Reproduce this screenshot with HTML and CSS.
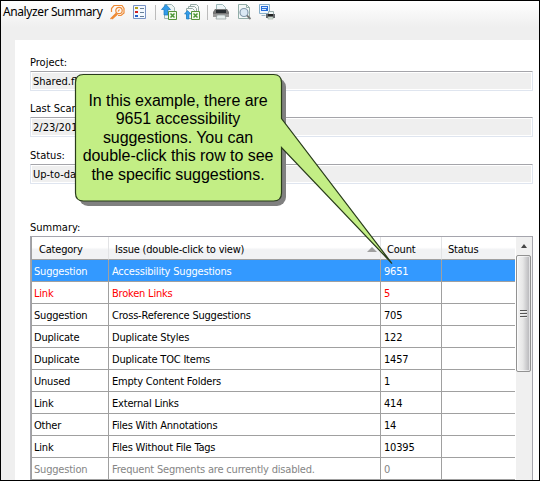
FILE: index.html
```html
<!DOCTYPE html>
<html lang="en">
<head>
<meta charset="utf-8">
<title>Analyzer Summary</title>
<link rel="stylesheet" href="styles.css">
</head>
<body>
<div class="window">
  <header class="toolbar">
    <h1>Analyzer Summary</h1>
    <svg class="icons" width="170" height="20" viewBox="108 2 170 20">
      <g fill="none" stroke="#ee8a35" stroke-width="1.2">
        <path d="M111.500 12V8.500L114 5.500H122L124 8.500V13L121 15.500H118"/>
        <circle cx="119" cy="10.500" r="3.200"/><path d="M118 11.500l1.500-2"/>
        <path d="M116.500 13L110.500 19M117.500 14L112 19" stroke-width="1.300"/>
      </g>
      <path d="M133.500 5.500h12v13h-12z" fill="#f4f9ff" stroke="#7892c4"/>
      <path d="M135 7h3v2h-3z" fill="#b2a020"/><path d="M135 11h3v2h-3z" fill="#d02020"/><path d="M135 15h3v2h-3z" fill="#2860c8"/>
      <path d="M140 8.500h4M140 12.500h4M140 16.500h4" stroke="#667f99"/>
      <path d="M155.500 5v15M207.500 5v15" stroke="#bbb"/>
      <path d="M164.500 4.500h7l3 3v11h-10z" fill="#eef5f4" stroke="#9eb5b3"/>
      <path d="M161.500 9.500L166 4.500L170.500 9.500H168V15H164V9.500z" fill="#329be8" stroke="#1879bf" stroke-width=".7"/>
      <g id="sheet"><path d="M168.500 11.500h8v8h-8z" fill="#f3faec" stroke="#55933a"/><path d="M170.500 13.500l4 4m0-4l-4 4" stroke="#4b9636" stroke-width="1.5"/></g>
      <path d="M190.500 4.500h6l2 2v9h-8z" fill="#f7faf9" stroke="#96aaa6"/><path d="M188.500 6.500h6l2 2v9h-8z" fill="#f7faf9" stroke="#96aaa6"/><path d="M186.500 8.500h6l2 2v8h-8z" fill="#f7faf9" stroke="#96aaa6"/>
      <path d="M184.500 14L187.500 10.500L191 14H189V19H186.500V14z" fill="#329be8" stroke="#1879bf" stroke-width=".6"/>
      <use href="#sheet" x="23"/>
      <path d="M216.500 4.500h6l3 3v5h-9z" fill="#eef5f7" stroke="#9db8b9"/>
      <path d="M215 9h12l2 3v5h-16v-5z" fill="#777"/><path d="M216 10h10v3h-10z" fill="#292e32"/><path d="M213 14h16v3h-16z" fill="#999"/><path d="M217 15h8l1 4h-10z" fill="#e7eeee" stroke="#8c9898" stroke-width=".7"/>
      <path d="M238.500 4.500h8l3 3v11h-11z" fill="#f3f9f8" stroke="#93ada8"/><path d="M246.500 4.500v3h3" fill="none" stroke="#93ada8"/>
      <circle cx="244" cy="12.500" r="4" fill="#dbe9f4" stroke="#8298ab" stroke-width="1.2"/><path d="M247 15.500l3.500 3.500" stroke="#777" stroke-width="1.8"/>
      <path d="M259.500 4.500h10v9h-10z" fill="#f0f7fd" stroke="#86aeca"/><path d="M261 6h7v5h-7z" fill="#286fdb"/><path d="M262 7.500h5M262 9.500h4" stroke="#d6ecff"/><path d="M261.500 15.500h4" stroke="#9db7c5"/>
      <path d="M268.500 11.500h5v4h-5z" fill="#edf4f4" stroke="#96aaaa"/><path d="M266 14h9v4h-9z" fill="#626669"/><path d="M268 14h5v2h-5z" fill="#222"/><path d="M268 17h5v2h-5z" fill="#dde8df" stroke="#86968a" stroke-width=".5"/>
    </svg>
  </header>
  <main class="panel">
    <div class="field"><label>Project:</label><div class="input">Shared.flprj</div></div>
    <div class="field"><label>Last Scan:</label><div class="input">2/23/2015</div></div>
    <div class="field last"><label>Status:</label><div class="input">Up-to-date</div></div>
    <div class="caption">Summary:</div>
    <div class="list">
      <div class="grid">
        <div class="row head"><span>Category</span><span>Issue (double-click to view)<i class="sort"></i></span><span>Count</span><span>Status</span></div>
        <div class="row selected"><span>Suggestion</span><span>Accessibility Suggestions</span><span>9651</span><span></span></div>
        <div class="row error"><span>Link</span><span>Broken Links</span><span>5</span><span></span></div>
        <div class="row"><span>Suggestion</span><span>Cross-Reference Suggestions</span><span>705</span><span></span></div>
        <div class="row"><span>Duplicate</span><span>Duplicate Styles</span><span>122</span><span></span></div>
        <div class="row"><span>Duplicate</span><span>Duplicate TOC Items</span><span>1457</span><span></span></div>
        <div class="row"><span>Unused</span><span>Empty Content Folders</span><span>1</span><span></span></div>
        <div class="row"><span>Link</span><span>External Links</span><span>414</span><span></span></div>
        <div class="row"><span>Other</span><span>Files With Annotations</span><span>14</span><span></span></div>
        <div class="row"><span>Link</span><span>Files Without File Tags</span><span>10395</span><span></span></div>
        <div class="row disabled"><span>Suggestion</span><span>Frequent Segments are currently disabled.</span><span>0</span><span></span></div>
      </div>
      <div class="scrollbar"><div class="arrow"></div><div class="thumb"><i></i><i></i><i></i></div></div>
    </div>
  </main>
  <div class="callout">
    <svg width="330" height="200" viewBox="70 70 330 200">
      <rect x="79" y="78" width="207" height="128" rx="9" fill="#808080"/>
      <path d="M83.500 74.500H273.500Q281.500 74.500 281.500 82.500V118.500L392 263.500L281.500 147.500V193Q281.500 201 273.500 201H83.500Q75.500 201 75.500 193V82.500Q75.500 74.500 83.500 74.500Z" fill="#c3ee85" stroke="#293c1b" stroke-width="1.2"/>
    </svg>
    <p>In this example, there are<br>9651 accessibility<br>suggestions. You can<br>double-click this row to see<br>the specific suggestions.</p>
  </div>
</div>
</body>
</html>
```
FILE: styles.css
```css
* { box-sizing: border-box; }
body { margin: 0; overflow: hidden; }
.window {
  position: relative;
  width: 540px;
  height: 481px;
  border: 1px solid #000;
  background: #efefef;
  overflow: hidden;
  font: 11px/14px "DejaVu Sans Condensed", "DejaVu Sans", sans-serif;
  letter-spacing: -0.2px;
  color: #000;
}
.toolbar {
  height: 39px;
  display: flex;
  align-items: flex-start;
  background: linear-gradient(#fff, #efefef 26px);
}
.toolbar h1 {
  margin: 2px 0 0 2px;
  width: 105px;
  font: 12px/18px "Noto Sans", sans-serif;
  letter-spacing: -0.4px;
  white-space: nowrap;
}
.icons { margin-top: 1px; flex: none; }
.panel {
  height: 440px;
  margin-left: 14px;
  padding: 15px 6px 0 15px;
  background: #fff;
}
.field { margin-bottom: 10px; }
.field:nth-child(2) { margin-bottom: 11px; }
.field label { display: block; height: 16px; padding-top: 1px; }
.field label, .input, .caption { letter-spacing: 0; }
.input {
  height: 20px;
  padding: 3px 2px 1px;
  border: 1px solid #dfe5ef;
  border-top-color: #a5a5aa;
  border-radius: 1px;
  background: #efefef;
  box-shadow: inset 0 0 0 1px #fff;
}
.field.last { margin-bottom: 36px; }
.caption { height: 16px; padding-top: 1px; }
.list {
  display: flex;
  height: 246px;
  border: 1px solid #a5a5ad;
  border-bottom: 0;
}
.grid { width: 484px; border-left: 1px solid #a0a0a0; }
.row {
  display: grid;
  grid-template-columns: 77px 272px 61px 73px;
  height: 22px;
}
.row span {
  border-right: 1px solid #a0a0a0;
  border-bottom: 1px solid #a0a0a0;
  padding: 5px 0 0 3px;
  white-space: nowrap;
}
.row span:first-child { padding-left: 2px; }
.row span:last-child { border-right: 0; }
.head { height: 23px; background: linear-gradient(#fff 45%, #f1f2f4 55%); }
.row.head span { position: relative; padding: 6px 0 0 6px; border-right-color: #e2e3e5; }
.row.head span:first-child { padding-left: 7px; }
.sort {
  position: absolute;
  right: 3px;
  top: 10px;
  border: 5px solid transparent;
  border-top: 0;
  border-bottom-color: #a0a0a0;
}
.selected { background: #3399ff; color: #fff; }
.error { color: #f00; }
.disabled { color: #858585; }
.scrollbar { width: 16px; margin-left: 1px; background: #f0f0f0; }
.arrow { height: 18px; display: flex; align-items: center; justify-content: center; }
.arrow::before { content: ""; border: 3.5px solid transparent; border-top: 0; border-bottom: 4px solid #454545; }
.thumb {
  width: 15px;
  height: 117px;
  border: 1px solid #929292;
  border-radius: 2px;
  background: linear-gradient(90deg, #f5f5f5, #e7e7e7 45%, #bdbdc0 90%);
  box-shadow: inset 0 0 0 1px #ffffff90;
  display: flex;
  flex-direction: column;
  align-items: center;
  justify-content: center;
  gap: 1px;
}
.thumb i { width: 7px; height: 2px; border-top: 1px solid #555; background: #eee; }
.callout { position: absolute; left: 69px; top: 69px; width: 330px; height: 200px; }
.callout svg { display: block; }
.callout p {
  position: absolute;
  left: 8px;
  top: 22px;
  width: 200px;
  margin: 0;
  text-align: center;
  white-space: nowrap;
  font: 16px/18.4px "Liberation Sans", Arial, sans-serif;
  letter-spacing: -0.05px;
}
```
